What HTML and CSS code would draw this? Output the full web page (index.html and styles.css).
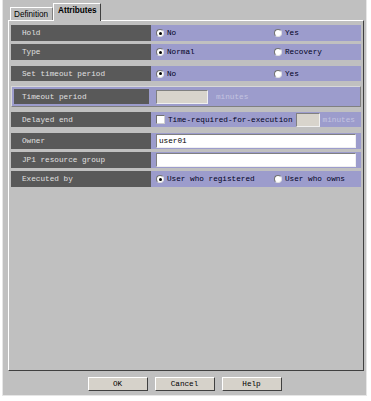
FILE: index.html
```html
<!DOCTYPE html>
<html>
<head>
<meta charset="utf-8">
<link rel="stylesheet" href="styles.css">
</head>
<body>
<div class="window">
  <div class="tabs">
    <div class="tab">Definition</div>
    <div class="tab active">Attributes</div>
  </div>
  <div class="panel">
    <div class="row r-hold">
      <div class="label">Hold</div>
      <div class="value">
        <span class="opt"><span class="radio on"></span>No</span>
        <span class="opt"><span class="radio"></span>Yes</span>
      </div>
    </div>
    <div class="row r-type">
      <div class="label">Type</div>
      <div class="value">
        <span class="opt"><span class="radio on"></span>Normal</span>
        <span class="opt"><span class="radio"></span>Recovery</span>
      </div>
    </div>
    <div class="row r-set">
      <div class="label">Set timeout period</div>
      <div class="value">
        <span class="opt"><span class="radio on"></span>No</span>
        <span class="opt"><span class="radio"></span>Yes</span>
      </div>
    </div>
    <div class="group">
      <div class="row r-timeout">
        <div class="label">Timeout period</div>
        <div class="value">
          <span class="field disabled w52"></span>
          <span class="unit">minutes</span>
        </div>
      </div>
    </div>
    <div class="row r-delay">
      <div class="label">Delayed end</div>
      <div class="value">
        <span class="check"></span><span class="chktext">Time-required-for-execution</span>
        <span class="field disabled w24"></span>
        <span class="unit">minutes</span>
      </div>
    </div>
    <div class="row r-owner">
      <div class="label">Owner</div>
      <div class="value">
        <span class="field text w200">user01</span>
      </div>
    </div>
    <div class="row r-jp1">
      <div class="label">JP1 resource group</div>
      <div class="value">
        <span class="field text w200"></span>
      </div>
    </div>
    <div class="row r-exec">
      <div class="label">Executed by</div>
      <div class="value">
        <span class="opt"><span class="radio on"></span>User who registered</span>
        <span class="opt"><span class="radio"></span>User who owns</span>
      </div>
    </div>
  </div>
  <div class="buttons">
    <div class="btn">OK</div>
    <div class="btn">Cancel</div>
    <div class="btn">Help</div>
  </div>
</div>
</body>
</html>
```

FILE: styles.css
```css
html, body {
  margin: 0;
  padding: 0;
  background: #ffffff;
}
.window {
  margin-left: 2px;
  width: 365px;
  height: 396px;
  background: #c0c0c0;
  border: 1px solid #e6e6e6;
  border-top: none;
  box-sizing: border-box;
  font-family: "Liberation Mono", "Courier New", monospace;
  font-size: 7.7px;
  display: flex;
  flex-direction: column;
}
.tabs {
  display: flex;
  align-items: flex-end;
  height: 20px;
  padding-left: 7px;
  padding-top: 3px;
  box-sizing: border-box;
  font-family: "Liberation Sans", Arial, sans-serif;
  font-size: 8.2px;
  position: relative;
  z-index: 1;
}
.tab {
  height: 13px;
  width: 43px;
  flex-shrink: 0;
  box-sizing: border-box;
  border-top: 1px solid #ffffff;
  border-left: 1px solid #ffffff;
  border-right: 1px solid #808080;
  padding-left: 3px;
  padding-top: 2px;
  color: #000;
  background: #c0c0c0;
  white-space: nowrap;
}
.tab.active {
  height: 18px;
  width: 48px;
  font-weight: bold;
  padding-top: 2px;
  margin-bottom: -1px;
  border-right: 1px solid #404040;
  padding-left: 4px;
}
.panel {
  margin-left: 5px;
  width: 356px;
  height: 351px;
  box-sizing: border-box;
  border-top: 1px solid #ffffff;
  border-left: 1px solid #ffffff;
  border-right: 1px solid #404040;
  border-bottom: 1px solid #404040;
  padding: 4px 2px 0 2px;
  display: flex;
  flex-direction: column;
}
.row {
  display: flex;
  height: 16px;
  flex-shrink: 0;
  color: #000022;
}
.label {
  width: 140px;
  flex-shrink: 0;
  background: #595959;
  color: #e0e0e0;
  padding-left: 11px;
  box-sizing: border-box;
  display: flex;
  align-items: center;
  white-space: nowrap;
}
.value {
  flex: 1;
  min-width: 0;
  overflow: hidden;
  background: #9c9ccc;
  padding-left: 5px;
  display: flex;
  align-items: center;
  white-space: nowrap;
}
.r-type { margin-top: 3px; }
.r-set { margin-top: 6px; height: 15px; }
.group {
  margin-top: 5px;
  height: 21px;
  flex-shrink: 0;
  background: #9c9ccc;
  border: 1px solid #d8d8d8;
  border-right-color: #808080;
  border-bottom-color: #808080;
  box-sizing: border-box;
  padding: 2px;
}
.r-timeout { height: 15px; }
.r-timeout .label { width: 135px; padding-left: 8px; }
.r-timeout .value { padding-left: 7px; }
.r-delay { margin-top: 5px; height: 15px; }
.r-owner { margin-top: 6px; }
.r-jp1 { margin-top: 3px; }
.r-exec { margin-top: 3px; }
.opt {
  display: flex;
  align-items: center;
  width: 118px;
  flex-shrink: 0;
}
.radio {
  width: 8px;
  height: 8px;
  flex-shrink: 0;
  border-radius: 50%;
  background: #ffffff;
  box-sizing: border-box;
  border: 1px solid #707070;
  border-right-color: #e0e0e0;
  border-bottom-color: #e0e0e0;
  margin-right: 3px;
  position: relative;
}
.radio.on::after {
  content: "";
  position: absolute;
  left: 1.5px;
  top: 1.5px;
  width: 3px;
  height: 3px;
  border-radius: 50%;
  background: #000;
}
.check {
  width: 9px;
  height: 9px;
  flex-shrink: 0;
  background: #fff;
  box-sizing: border-box;
  border: 1px solid #707070;
  border-right-color: #d0d0d0;
  border-bottom-color: #d0d0d0;
  margin-right: 3px;
}
.chktext { margin-right: 3px; }
.field {
  height: 14px;
  flex-shrink: 0;
  box-sizing: border-box;
  border: 1px solid #808080;
  border-right-color: #f0f0f0;
  border-bottom-color: #f0f0f0;
  display: flex;
  align-items: center;
  padding-left: 2px;
}
.field.disabled { background: #d8d4cc; }
.field.text { background: #ffffff; color: #000; }
.w52 { width: 52px; }
.w24 { width: 24px; }
.w200 { width: 200px; }
.unit {
  color: #c4c4e0;
  margin-left: 3px;
}
.r-timeout .unit { margin-left: 8px; }
.buttons {
  display: flex;
  justify-content: center;
  gap: 7px;
  padding-top: 6px;
}
.btn {
  width: 60px;
  height: 14px;
  box-sizing: border-box;
  background: #d6d2ca;
  border-top: 1px solid #ffffff;
  border-left: 1px solid #ffffff;
  border-right: 1px solid #404040;
  border-bottom: 1px solid #404040;
  display: flex;
  align-items: center;
  justify-content: center;
  color: #000;
}
```
